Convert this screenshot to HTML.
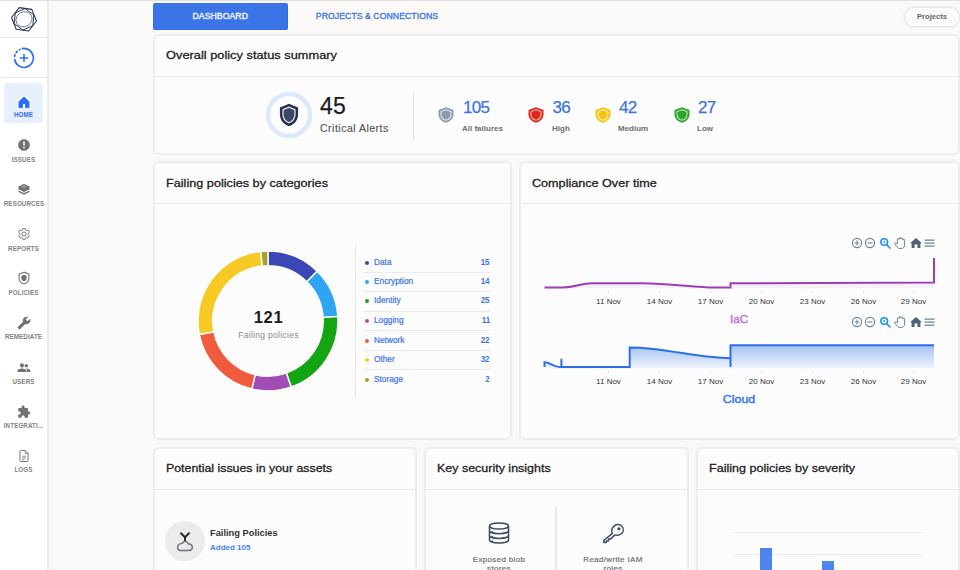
<!DOCTYPE html>
<html lang="en">
<head>
<meta charset="utf-8">
<title>Dashboard</title>
<style>
*{box-sizing:border-box;margin:0;padding:0}
html,body{width:960px;height:570px;overflow:hidden}
body{background:#faf9f8;font-family:"Liberation Sans",sans-serif;color:#1c1c1c;position:relative}
.abs{position:absolute}
/* sidebar */
#side{position:absolute;left:0;top:0;width:49px;height:570px;background:#fff;border-right:2px solid #ececec}
#side .sep{position:absolute;left:0;width:47px;height:1px;background:#e6e6e6}
.nav{position:absolute;left:0;width:47px;text-align:center;font-size:7.4px;letter-spacing:.15px;color:#828282;font-weight:bold}
.nav svg{display:block;margin:0 auto}
.nav span{display:block;white-space:nowrap;margin-top:3px;transform:scaleX(.84)}
#home{position:absolute;left:4px;top:83px;width:39px;height:40px;background:#e8f0fe;border-radius:3px}
/* tabs */
#tab1{position:absolute;left:153px;top:3px;width:134.500px;height:26.500px;background:#3b74e6;box-shadow:inset 0 0 0 1px #3570e2,inset 0 -1px 0 0 #2a66dd;border-radius:3px;color:#fff;font-size:8.7px;text-align:center;line-height:26px;letter-spacing:.05px;-webkit-text-stroke:.3px #fff}
#tab2{position:absolute;left:297px;top:3px;width:160px;height:26px;color:#3b74e6;font-size:8.7px;text-align:center;line-height:26px;letter-spacing:.05px;white-space:nowrap;-webkit-text-stroke:.3px #3b74e6}
#proj{position:absolute;left:904px;top:7px;width:56px;height:20px;border:1px solid #e9e9e9;box-shadow:0 0 0 1px #f1f0ef;border-radius:10px;background:#fbfbfb;font-size:7.6px;font-weight:bold;color:#666;text-align:center;line-height:17px}
/* cards */
.card{position:absolute;background:#fcfcfc;border:2px solid #ededed;border-radius:6px}
.card h3{position:absolute;left:11px;top:13px;font-size:10.6px;line-height:12px;font-weight:normal;color:#1e1e1e;white-space:nowrap;transform-origin:0 50%;-webkit-text-stroke:.28px #1e1e1e}
.card .hl{position:absolute;left:0;right:0;top:39px;height:1px;background:#e9e9e9}
.vline{position:absolute;width:1px;background:#e6e6e6}
.num{position:absolute;font-size:17px;color:#3b74e6;white-space:nowrap;letter-spacing:-.7px;-webkit-text-stroke:.25px #3b74e6}
.lab{position:absolute;font-size:8px;color:#6e6e6e;white-space:nowrap;font-weight:bold}
.lg{position:absolute;left:212px;width:123px;height:12px;font-size:8.6px;line-height:11px;color:#3b74e6;white-space:nowrap;margin-top:-1px}
.lg i{position:absolute;left:-2.500px;top:3.500px;width:4.500px;height:4.500px;border-radius:50%}
.lg span{position:absolute;left:7px;top:0;transform:scaleX(.965);transform-origin:0 50%;-webkit-text-stroke:.2px #3b74e6}
.lg b{position:absolute;right:0;top:0;transform:scaleX(.93);transform-origin:100% 50%}
.lgl{position:absolute;left:209px;width:127px;height:1px;background:#ebebeb}
.ins{font-size:8px;color:#747474;text-align:center;line-height:8.500px;white-space:nowrap;letter-spacing:.33px;-webkit-text-stroke:.22px #747474}
</style>
</head>
<body>
<div class="abs" style="left:0;top:0;width:960px;height:1px;background:#e2e0de;z-index:5"></div>
<div id="side">
  <svg class="abs" style="left:10px;top:5px" width="28" height="28" viewBox="-14 -14.300 28 28" fill="none" stroke="#243352" stroke-width="1.05" stroke-linejoin="round">
    <polygon points="12.48,1.75 4.72,11.68 -7.76,9.93 -12.48,-1.75 -4.72,-11.68 7.76,-9.93"/>
    <polygon points="8.74,6.35 -1.13,10.74 -9.87,4.39 -8.74,-6.35 1.13,-10.74 9.87,-4.39" stroke-width=".95"/>
    <ellipse rx="8.300" ry="7.300" transform="rotate(-30)" stroke-width=".6"/>
  </svg>
  <div class="sep" style="top:37px"></div>
  <svg class="abs" style="left:12px;top:46px" width="24" height="24" viewBox="-12 -12 24 24" fill="none" stroke="#2b6ff0" stroke-width="1.7" stroke-linecap="round">
    <path d="M-1.5,-9.4 A9.5,9.5 0 1 1 -9.4,1.5"/>
    <path d="M-9.4,-1.6 A9.5,9.5 0 0 1 -4,-8.6" stroke-dasharray="1.6 2.6"/>
    <path d="M-3.6,0 H3.6 M0,-3.6 V3.6" stroke-width="1.5"/>
  </svg>
  <div class="sep" style="top:77px"></div>
  <div id="home"></div>
  <div class="nav" style="top:94px;color:#2b6ff0">
    <svg style="margin-top:1px" width="14" height="14" viewBox="0 0 24 24" fill="#2b6ff0" stroke="#2b6ff0" stroke-width="1.500" stroke-linejoin="round"><path d="M9.300 21.500v-7h5.400v7h5.800v-10L12 3.500 3.500 11.500v10z"/></svg>
    <span style="margin-top:1px">HOME</span>
  </div>
  <div class="nav" style="top:138px">
    <svg width="14" height="14" viewBox="0 0 24 24" fill="#727272"><path d="M12 2C6.48 2 2 6.48 2 12s4.48 10 10 10 10-4.480 10-10S17.520 2 12 2zm1.300 15.500h-2.600v-2.600h2.600v2.600zm0-4.500h-2.600V6h2.600v7z"/></svg>
    <span>ISSUES</span>
  </div>
  <div class="nav" style="top:182px">
    <svg width="14" height="14" viewBox="0 0 24 24" fill="#727272"><path d="M12 3 2.500 7.500v5L12 17l9.500-4.500v-5z"/><path d="M2.500 14.500v2.800L12 22l9.500-4.700v-2.800L12 19z"/><path d="M12 5.200 17.500 7.800 12 10.400 6.500 7.800z" fill="#9a9a9a"/></svg>
    <span>RESOURCES</span>
  </div>
  <div class="nav" style="top:227px">
    <svg width="14" height="14" viewBox="0 0 24 24" fill="none" stroke="#727272" stroke-width="1.600"><path d="M19.140 12.940c.040-.300.060-.610.060-.940 0-.320-.020-.640-.070-.940l2.030-1.580c.180-.140.230-.410.120-.610l-1.920-3.320c-.120-.220-.370-.290-.590-.220l-2.390.96c-.500-.380-1.030-.700-1.620-.940l-.360-2.540c-.040-.240-.240-.410-.480-.410h-3.840c-.240 0-.430.170-.470.410l-.360 2.540c-.590.240-1.130.57-1.620.94l-2.390-.96c-.220-.080-.470 0-.590.220L2.740 8.870c-.120.210-.080.470.12.610l2.030 1.580c-.050.300-.090.630-.090.940s.020.640.07.940l-2.030 1.580c-.180.140-.230.410-.120.610l1.920 3.320c.120.220.370.290.590.220l2.390-.96c.500.380 1.030.700 1.620.94l.360 2.540c.050.240.240.410.480.410h3.840c.240 0 .440-.170.470-.410l.360-2.540c.590-.240 1.130-.560 1.620-.940l2.390.96c.220.080.470 0 .590-.220l1.920-3.320c.120-.220.070-.470-.120-.610l-2.010-1.580z"/><circle cx="12" cy="12" r="3.600"/></svg>
    <span>REPORTS</span>
  </div>
  <div class="nav" style="top:271px">
    <svg width="14" height="14" viewBox="0 0 24 24" fill="none" stroke="#727272" stroke-width="1.800"><path d="M12 2 3.500 5.500v6c0 5.200 3.600 9.500 8.500 10.800 4.900-1.300 8.500-5.600 8.500-10.800v-6z"/><path d="M12 6.500 7.500 8.300v3.500c0 3 1.900 5.400 4.500 6.200 2.600-.800 4.500-3.200 4.500-6.200V8.300z" fill="#727272" stroke="none"/></svg>
    <span>POLICIES</span>
  </div>
  <div class="nav" style="top:316px">
    <svg width="14" height="14" viewBox="0 0 24 24" fill="#727272"><g transform="translate(24,0) scale(-1,1)"><path d="M22.700 19l-9.100-9.100c.900-2.300.400-5-1.500-6.900-2-2-5-2.400-7.400-1.300L9 6 6 9 1.600 4.700C.4 7.100.9 10.100 2.900 12.100c1.900 1.900 4.600 2.400 6.900 1.500l9.100 9.100c.4.400 1 .4 1.400 0l2.300-2.300c.5-.4.500-1.100.1-1.400z"/></g></svg>
    <span style="margin-top:2px">REMEDIATE</span>
  </div>
  <div class="nav" style="top:360px">
    <svg style="margin-top:1px" width="14" height="14" viewBox="0 0 24 24" fill="#727272"><path d="M16 11c1.660 0 2.990-1.340 2.990-3S17.660 5 16 5c-1.660 0-3 1.340-3 3s1.340 3 3 3zm-7.500 0c1.940 0 3.490-1.560 3.490-3.500S10.440 4 8.500 4 5 5.560 5 7.500 6.560 11 8.500 11zm0 2c-2.330 0-7.500 1.170-7.500 3.500V19h15v-2.500c0-2.330-5.170-3.500-7.500-3.500zm7.500 0c-.290 0-.620.020-.970.050 1.160.84 1.970 1.970 1.970 3.450V19h6v-2.500c0-2.330-4.670-3.500-7-3.500z"/></svg>
    <span style="margin-top:2px">USERS</span>
  </div>
  <div class="nav" style="top:404px">
    <svg style="margin-top:1px" width="14" height="14" viewBox="0 0 24 24" fill="#727272"><path d="M20.500 11H19V7c0-1.100-.900-2-2-2h-4V3.500C13 2.120 11.880 1 10.500 1S8 2.120 8 3.500V5H4c-1.100 0-1.990.900-1.990 2v3.800H3.500c1.490 0 2.700 1.210 2.700 2.700s-1.210 2.700-2.700 2.700H2V20c0 1.100.9 2 2 2h3.800v-1.500c0-1.490 1.210-2.700 2.700-2.700 1.490 0 2.700 1.210 2.700 2.700V22H17c1.100 0 2-.900 2-2v-4h1.500c1.380 0 2.500-1.120 2.500-2.500S21.880 11 20.500 11z"/></svg>
    <span style="margin-top:2px">INTEGRATI...</span>
  </div>
  <div class="nav" style="top:449px">
    <svg width="14" height="14" viewBox="0 0 24 24" fill="none" stroke="#727272" stroke-width="1.700" stroke-linejoin="round"><path d="M14 2.500H6.500c-.800 0-1.500.700-1.500 1.500v16c0 .800.700 1.500 1.500 1.500h11c.800 0 1.500-.700 1.500-1.500V7.500z"/><path d="M14 2.500v5h5M8.500 12.500h7M8.500 15.500h7M8.500 18.500h4" stroke-width="1.300"/></svg>
    <span style="margin-top:2px">LOGS</span>
  </div>
</div>

<div id="tab1">DASHBOARD</div>
<div id="tab2">PROJECTS &amp; CONNECTIONS</div>
<div id="proj">Projects</div>

<!-- card 1 -->
<div class="card" id="c1" style="left:153px;top:34px;width:807px;height:121px">
  <h3 style="top:13px;transform:scaleX(1.210)">Overall policy status summary</h3>
  <div class="hl" style="top:40px"></div>
  <svg class="abs" style="left:109px;top:54px" width="50" height="50" viewBox="-25 -25 50 50">
    <circle r="21" fill="#fdfdfd" stroke="#dce8fb" stroke-width="4.400"/>
    <g transform="scale(1.07)"><path d="M0,-10.500 L-8.500,-7 V-1 C-8.500,4.800 -4.900,9 0,10.500 C4.900,9 8.500,4.800 8.500,-1 V-7 Z" fill="#25314d"/>
    <path d="M0,-7.300 L-5.600,-5 V-.800 C-5.600,3 -3.200,6 0,7.200 C3.200,6 5.600,3 5.600,-.800 V-5 Z" fill="#3a4860" stroke="#e8ecf2" stroke-width="1.150"/></g>
  </svg>
  <div class="abs" style="left:165px;top:58px;font-size:23px;line-height:24px;color:#1c1c1c;letter-spacing:.2px;-webkit-text-stroke:.25px #1c1c1c">45</div>
  <div class="abs" style="left:165px;top:85px;font-size:10.500px;line-height:14px;color:#555;letter-spacing:.5px;white-space:nowrap;-webkit-text-stroke:.15px #555">Critical Alerts</div>
  <div class="vline" style="left:258px;top:55px;height:49px"></div>

  <svg class="abs sh" style="left:283px;top:70px" width="16" height="18" viewBox="-8 -9 16 18"><path d="M0,-7.800 L-7.500,-5 V-.800 C-7.500,3.600 -4.200,6.600 0,7.800 C4.200,6.600 7.500,3.600 7.500,-.800 V-5 Z" fill="#8d9bb0"/><path d="M0,-5.300 L-5,-3.400 V-.600 C-5,2.500 -2.800,4.500 0,5.300 C2.800,4.500 5,2.500 5,-.600 V-3.400 Z" fill="none" stroke="#dfe4ea" stroke-width="1.1"/></svg>
  <div class="num" style="left:308px;top:62px">105</div>
  <div class="lab" style="left:307px;top:88px">All failures</div>

  <svg class="abs sh" style="left:373px;top:70px" width="16" height="18" viewBox="-8 -9 16 18"><path d="M0,-7.800 L-7.500,-5 V-.800 C-7.500,3.600 -4.200,6.600 0,7.800 C4.200,6.600 7.500,3.600 7.500,-.800 V-5 Z" fill="#e0261c"/><path d="M0,-5.300 L-5,-3.400 V-.600 C-5,2.500 -2.800,4.500 0,5.300 C2.800,4.500 5,2.500 5,-.600 V-3.400 Z" fill="none" stroke="#f8b8b2" stroke-width="1.1"/></svg>
  <div class="num" style="left:397.500px;top:62px">36</div>
  <div class="lab" style="left:397px;top:88px">High</div>

  <svg class="abs sh" style="left:440px;top:70px" width="16" height="18" viewBox="-8 -9 16 18"><path d="M0,-7.800 L-7.500,-5 V-.800 C-7.500,3.600 -4.200,6.600 0,7.800 C4.200,6.600 7.500,3.600 7.500,-.800 V-5 Z" fill="#f2c414"/><path d="M0,-5.300 L-5,-3.400 V-.600 C-5,2.500 -2.800,4.500 0,5.300 C2.800,4.500 5,2.500 5,-.600 V-3.400 Z" fill="none" stroke="#fdeeb0" stroke-width="1.1"/></svg>
  <div class="num" style="left:464px;top:62px">42</div>
  <div class="lab" style="left:463px;top:88px">Medium</div>

  <svg class="abs sh" style="left:519px;top:70px" width="16" height="18" viewBox="-8 -9 16 18"><path d="M0,-7.800 L-7.500,-5 V-.800 C-7.500,3.600 -4.200,6.600 0,7.800 C4.200,6.600 7.500,3.600 7.500,-.800 V-5 Z" fill="#2ea52a"/><path d="M0,-5.300 L-5,-3.400 V-.600 C-5,2.500 -2.800,4.500 0,5.300 C2.800,4.500 5,2.500 5,-.600 V-3.400 Z" fill="none" stroke="#b4e4b2" stroke-width="1.1"/></svg>
  <div class="num" style="left:543px;top:62px">27</div>
  <div class="lab" style="left:542px;top:88px">Low</div>

</div>

<!-- card 2 -->
<div class="card" id="c2" style="left:153px;top:161px;width:359px;height:279px">
  <h3 style="top:14px;transform:scaleX(1.196)">Failing policies by categories</h3>
  <div class="hl" style="top:40px"></div>
  <svg class="abs" style="left:40.500px;top:85.500px" width="144" height="144" viewBox="-72 -72 144 144" stroke="#fcfcfc" stroke-width="1.500" stroke-linejoin="round"><path d="M0.00,-70.00 A70,70 0 0 1 49.18,-49.82 L38.78,-39.28 A55.2,55.2 0 0 0 0.00,-55.20 Z" fill="#3b47b5"/><path d="M49.18,-49.82 A70,70 0 0 1 69.85,-4.54 L55.08,-3.58 A55.2,55.2 0 0 0 38.78,-39.28 Z" fill="#2ea4f2"/><path d="M69.85,-4.54 A70,70 0 0 1 23.18,66.05 L18.28,52.09 A55.2,55.2 0 0 0 55.08,-3.58 Z" fill="#14a514"/><path d="M23.18,66.05 A70,70 0 0 1 -16.21,68.10 L-12.78,53.70 A55.2,55.2 0 0 0 18.28,52.09 Z" fill="#a24db5"/><path d="M-16.21,68.10 A70,70 0 0 1 -68.68,13.54 L-54.16,10.68 A55.2,55.2 0 0 0 -12.78,53.70 Z" fill="#ef5b3c"/><path d="M-68.68,13.54 A70,70 0 0 1 -7.26,-69.62 L-5.72,-54.90 A55.2,55.2 0 0 0 -54.16,10.68 Z" fill="#f9c923"/><path d="M-7.26,-69.62 A70,70 0 0 1 0.00,-70.00 L0.00,-55.20 A55.2,55.2 0 0 0 -5.72,-54.90 Z" fill="#a8a02c"/></svg>
  <div class="abs" style="left:63.500px;top:145px;width:100px;text-align:center;font-size:16.500px;font-weight:bold;line-height:18px;color:#1c1c1c;letter-spacing:.7px">121</div>
  <div class="abs" style="left:63.500px;top:166.500px;width:100px;text-align:center;font-size:8.500px;line-height:10px;color:#8a8a8a;letter-spacing:.3px;white-space:nowrap">Failing policies</div>
  <div class="vline" style="left:200px;top:83px;height:152px"></div>
  <div class="lg" style="top:95px"><i style="background:#3b47b5"></i><span>Data</span><b>15</b></div>
  <div class="lg" style="top:114px"><i style="background:#2ea4f2"></i><span>Encryption</span><b>14</b></div>
  <div class="lg" style="top:133px"><i style="background:#14a514"></i><span>Identity</span><b>25</b></div>
  <div class="lg" style="top:153px"><i style="background:#a24db5"></i><span>Logging</span><b>11</b></div>
  <div class="lg" style="top:173px"><i style="background:#ef5b3c"></i><span>Network</span><b>22</b></div>
  <div class="lg" style="top:192px"><i style="background:#f9c923"></i><span>Other</span><b>32</b></div>
  <div class="lg" style="top:212px"><i style="background:#a8a02c"></i><span>Storage</span><b>2</b></div>
  <div class="lgl" style="top:109px"></div>
  <div class="lgl" style="top:128px"></div>
  <div class="lgl" style="top:148px"></div>
  <div class="lgl" style="top:167px"></div>
  <div class="lgl" style="top:187px"></div>
  <div class="lgl" style="top:206px"></div>

</div>

<!-- card 3 -->
<div class="card" id="c3" style="left:519px;top:161px;width:441px;height:279px">
  <h3 style="top:14px;transform:scaleX(1.190)">Compliance Over time</h3>
  <div class="hl" style="top:40px"></div>
  <svg class="abs" style="left:0;top:0" width="437" height="274" viewBox="0 0 437 274"><defs><linearGradient id="gb" x1="0" y1="0" x2="0" y2="1"><stop offset="0" stop-color="#2b6fe8" stop-opacity=".42"/><stop offset="1" stop-color="#2b6fe8" stop-opacity=".06"/></linearGradient></defs><g fill="none" stroke="#6e8192" stroke-width="1.1"><circle cx="336" cy="80" r="4.6"/><path d="M333.6,80 h4.8 M336,77.6 v4.8"/><circle cx="349" cy="80" r="4.6"/><path d="M346.6,80 h4.8"/></g><g fill="none" stroke="#1e8ff5" stroke-width="1.6" stroke-linecap="round"><circle cx="363.2" cy="79" r="3.3"/><path d="M365.8,81.7 l3.2,3.3"/></g><circle cx="363.2" cy="79" r="0.9" fill="#1e8ff5"/><g fill="none" stroke="#6e8192" stroke-width="1" stroke-linejoin="round" stroke-linecap="round"><path d="M376.4,80.5 v-4 a.9,.9 0 0 1 1.8,0 v-1 a.9,.9 0 0 1 1.8,0 v.6 a.9,.9 0 0 1 1.8,0 v1 a.9,.9 0 0 1 1.8,0 v5 c0,2 -1.400,3.400 -3.400,3.400 h-1.500 c-1.300,0 -2.200,-.700 -2.900,-1.800 l-2.300,-3.400 c.700,-.900 1.700,-.700 2.300,0 z"/></g><path d="M395,75 l6,5.200 h-1.600 v4.800 h-3 v-3.400 h-2.800 v3.400 h-3 v-4.800 h-1.600 z" fill="#4f6378"/><path d="M403.5,77 h10 M403.5,80 h10 M403.5,83 h10" stroke="#6e8192" stroke-width="1.25" fill="none"/><g fill="none" stroke="#6e8192" stroke-width="1.1"><circle cx="336" cy="159" r="4.6"/><path d="M333.6,159 h4.8 M336,156.6 v4.8"/><circle cx="349" cy="159" r="4.6"/><path d="M346.6,159 h4.8"/></g><g fill="none" stroke="#1e8ff5" stroke-width="1.6" stroke-linecap="round"><circle cx="363.2" cy="158" r="3.3"/><path d="M365.8,160.7 l3.2,3.3"/></g><circle cx="363.2" cy="158" r="0.9" fill="#1e8ff5"/><g fill="none" stroke="#6e8192" stroke-width="1" stroke-linejoin="round" stroke-linecap="round"><path d="M376.4,159.5 v-4 a.9,.9 0 0 1 1.8,0 v-1 a.9,.9 0 0 1 1.8,0 v.6 a.9,.9 0 0 1 1.8,0 v1 a.9,.9 0 0 1 1.8,0 v5 c0,2 -1.400,3.400 -3.400,3.400 h-1.500 c-1.300,0 -2.200,-.700 -2.900,-1.800 l-2.300,-3.400 c.700,-.900 1.700,-.700 2.300,0 z"/></g><path d="M395,154 l6,5.200 h-1.600 v4.800 h-3 v-3.400 h-2.800 v3.400 h-3 v-4.800 h-1.600 z" fill="#4f6378"/><path d="M403.5,156 h10 M403.5,159 h10 M403.5,162 h10" stroke="#6e8192" stroke-width="1.25" fill="none"/><path d="M 23.5,124.5 L 42.0,124.5 C 55.0,124.5 59.0,120.3 71.0,120.3 L 121.0,120.3 C 151.0,120.6 174.0,124.5 193.0,124.5 L 209.5,124.5 L 209.5,120.3 L 413.0,119.4 L 413.0,95.0 L413,125.5 L23.5,125.5 Z" fill="#9b3fb5" fill-opacity=".06"/><path d="M 23.5,124.5 L 42.0,124.5 C 55.0,124.5 59.0,120.3 71.0,120.3 L 121.0,120.3 C 151.0,120.6 174.0,124.5 193.0,124.5 L 209.5,124.5 L 209.5,120.3 L 413.0,119.4 L 413.0,95.0" fill="none" stroke="#9b3fb5" stroke-width="2" stroke-linejoin="miter"/><path d="M 23.5,204.0 L 23.5,199.2 C 29.0,199.2 32.0,204.0 39.0,204.0 L 40.4,204.0 L 40.4,195.8 L 40.4,204.0 L 108.7,204.0 L 108.7,184.4 C 144.0,184.4 174.0,195.0 209.5,195.2 L 209.5,204.0 L 209.5,182.2 L 413.0,182.2 L413,205.5 L23.5,205.5 Z" fill="url(#gb)"/><path d="M 23.5,204.0 L 23.5,199.2 C 29.0,199.2 32.0,204.0 39.0,204.0 L 40.4,204.0 L 40.4,195.8 L 40.4,204.0 L 108.7,204.0 L 108.7,184.4 C 144.0,184.4 174.0,195.0 209.5,195.2 L 209.5,204.0 L 209.5,182.2 L 413.0,182.2" fill="none" stroke="#2b6fe8" stroke-width="2" stroke-linejoin="miter"/><text x="87.5" y="141" text-anchor="middle" font-size="8" fill="#333" font-family="Liberation Sans, sans-serif">11 Nov</text><text x="138.5" y="141" text-anchor="middle" font-size="8" fill="#333" font-family="Liberation Sans, sans-serif">14 Nov</text><text x="189.5" y="141" text-anchor="middle" font-size="8" fill="#333" font-family="Liberation Sans, sans-serif">17 Nov</text><text x="240.5" y="141" text-anchor="middle" font-size="8" fill="#333" font-family="Liberation Sans, sans-serif">20 Nov</text><text x="291.5" y="141" text-anchor="middle" font-size="8" fill="#333" font-family="Liberation Sans, sans-serif">23 Nov</text><text x="342.5" y="141" text-anchor="middle" font-size="8" fill="#333" font-family="Liberation Sans, sans-serif">26 Nov</text><text x="392.5" y="141" text-anchor="middle" font-size="8" fill="#333" font-family="Liberation Sans, sans-serif">29 Nov</text><path d="M87.5,127.5 v2.500" stroke="#e4e4e4" stroke-width="1"/><path d="M138.5,127.5 v2.500" stroke="#e4e4e4" stroke-width="1"/><path d="M189.5,127.5 v2.500" stroke="#e4e4e4" stroke-width="1"/><path d="M240.5,127.5 v2.500" stroke="#e4e4e4" stroke-width="1"/><path d="M291.5,127.5 v2.500" stroke="#e4e4e4" stroke-width="1"/><path d="M342.5,127.5 v2.500" stroke="#e4e4e4" stroke-width="1"/><path d="M392.5,127.5 v2.500" stroke="#e4e4e4" stroke-width="1"/><text x="87.5" y="221" text-anchor="middle" font-size="8" fill="#333" font-family="Liberation Sans, sans-serif">11 Nov</text><text x="138.5" y="221" text-anchor="middle" font-size="8" fill="#333" font-family="Liberation Sans, sans-serif">14 Nov</text><text x="189.5" y="221" text-anchor="middle" font-size="8" fill="#333" font-family="Liberation Sans, sans-serif">17 Nov</text><text x="240.5" y="221" text-anchor="middle" font-size="8" fill="#333" font-family="Liberation Sans, sans-serif">20 Nov</text><text x="291.5" y="221" text-anchor="middle" font-size="8" fill="#333" font-family="Liberation Sans, sans-serif">23 Nov</text><text x="342.5" y="221" text-anchor="middle" font-size="8" fill="#333" font-family="Liberation Sans, sans-serif">26 Nov</text><text x="392.5" y="221" text-anchor="middle" font-size="8" fill="#333" font-family="Liberation Sans, sans-serif">29 Nov</text><path d="M87.5,207.5 v2.500" stroke="#e4e4e4" stroke-width="1"/><path d="M138.5,207.5 v2.500" stroke="#e4e4e4" stroke-width="1"/><path d="M189.5,207.5 v2.500" stroke="#e4e4e4" stroke-width="1"/><path d="M240.5,207.5 v2.500" stroke="#e4e4e4" stroke-width="1"/><path d="M291.5,207.5 v2.500" stroke="#e4e4e4" stroke-width="1"/><path d="M342.5,207.5 v2.500" stroke="#e4e4e4" stroke-width="1"/><path d="M392.5,207.5 v2.500" stroke="#e4e4e4" stroke-width="1"/><text x="218" y="160" text-anchor="middle" font-size="11.2" fill="#bd6fdc" stroke="#bd6fdc" stroke-width=".4" textLength="18" lengthAdjust="spacingAndGlyphs" font-family="Liberation Sans, sans-serif">IaC</text><text x="218" y="240" text-anchor="middle" font-size="11.2" fill="#2f74f0" stroke="#2f74f0" stroke-width=".4" textLength="32.5" lengthAdjust="spacingAndGlyphs" font-family="Liberation Sans, sans-serif">Cloud</text></svg>
</div>

<!-- card 4 -->
<div class="card" id="c4" style="left:153px;top:447px;width:264px;height:140px">
  <h3 style="transform:scaleX(1.166)">Potential issues in your assets</h3>
  <div class="hl" style="top:40px"></div>
  <svg class="abs" style="left:9px;top:71px" width="42" height="42" viewBox="-21 -21 42 42">
    <circle r="20" fill="#ebebeb"/>
    <path d="M-3.800,-7.600 L0,-3.800 L3.800,-7.600 M0,-3.800 V1" fill="none" stroke="#262626" stroke-width="2" stroke-linecap="square" stroke-linejoin="round"/>
    <path d="M-2.800,2.400 C-2.300,1.100 -1.300,.400 0,.400 C1.500,.400 2.700,1.300 3.100,2.800 C5.600,2.900 7.300,4.300 7.300,6.300 C7.300,8.200 5.800,9.500 3.900,9.500 H-4 C-5.900,9.500 -7.400,8.200 -7.400,6.300 C-7.400,4.300 -5.400,2.700 -2.800,2.400 Z" fill="#ebebeb" stroke="#6a6f78" stroke-width="1.400" stroke-linejoin="round"/>
  </svg>
  <div class="abs" style="left:55px;top:78px;font-size:9.300px;font-weight:bold;color:#333;white-space:nowrap;line-height:12px">Failing Policies</div>
  <div class="abs" style="left:55px;top:94px;font-size:8px;font-weight:bold;color:#4a80ee;white-space:nowrap;line-height:10px">Added 105</div>

</div>
<!-- card 5 -->
<div class="card" id="c5" style="left:424px;top:447px;width:265px;height:140px">
  <h3 style="transform:scaleX(1.177)">Key security insights</h3>
  <div class="hl" style="top:40px"></div>
  <svg class="abs" style="left:61px;top:72px" width="24" height="24" viewBox="-12 -12 24 24" fill="none" stroke="#3d4a5c" stroke-width="1.500">
    <ellipse cx="0" cy="-7" rx="9.500" ry="3"/>
    <path d="M-9.500,-7 V7 C-9.500,8.700 -5.200,10 0,10 C5.200,10 9.500,8.700 9.500,7 V-7"/>
    <path d="M-9.500,-2.300 C-9.500,-.600 -5.200,.700 0,.700 C5.200,.700 9.500,-.600 9.500,-2.300 M-9.500,2.400 C-9.500,4.100 -5.200,5.400 0,5.400 C5.200,5.400 9.500,4.100 9.500,2.400"/>
    <path d="M-6.600,-1.200 v.100 M-6.600,3.500 v.100 M-6.600,8 v.100" stroke-linecap="round" stroke-width="1.600"/>
  </svg>
  <div class="abs ins" style="left:23px;top:107px;width:100px">Exposed blob<br>stores</div>
  <div class="vline" style="left:129px;top:57px;height:80px;width:1.500px;background:#e9e9ee"></div>
  <svg class="abs" style="left:175px;top:73px" width="24" height="24" viewBox="-12 -12 24 24" fill="none" stroke="#3d4a5c" stroke-width="1.600" stroke-linejoin="round" stroke-linecap="round">
    <path transform="translate(.4,-.6) scale(.92)" d="M-1.200,.200 C-2.400,-2.600 -1.600,-6 1,-8.200 C3.800,-10.400 7.600,-10 9.600,-7.400 C11.400,-5 11,-1.600 8.600,.400 C6.400,2.200 3.800,2.400 1.600,1.600 L-3,6 H-5.400 V8.200 H-7.800 V10 H-10.400 V7.400 Z"/>
    <circle cx="5.900" cy="-5.200" r=".800" fill="#3d4a5c"/>
  </svg>
  <div class="abs ins" style="left:137px;top:107px;width:100px">Read/write IAM<br>roles</div>

</div>
<!-- card 6 -->
<div class="card" id="c6" style="left:696px;top:447px;width:264px;height:140px">
  <h3 style="transform:scaleX(1.186)">Failing policies by severity</h3>
  <div class="hl" style="top:40px"></div>
  <div class="abs" style="left:36px;top:83px;width:188px;height:1px;background:#e9e9e9"></div>
  <div class="abs" style="left:36px;top:105px;width:188px;height:1px;background:#e9e9e9"></div>
  <div class="abs" style="left:62px;top:99px;width:12px;height:40px;background:#4d85ec"></div>
  <div class="abs" style="left:124px;top:112px;width:12px;height:40px;background:#4d85ec"></div>

</div>
</body>
</html>
